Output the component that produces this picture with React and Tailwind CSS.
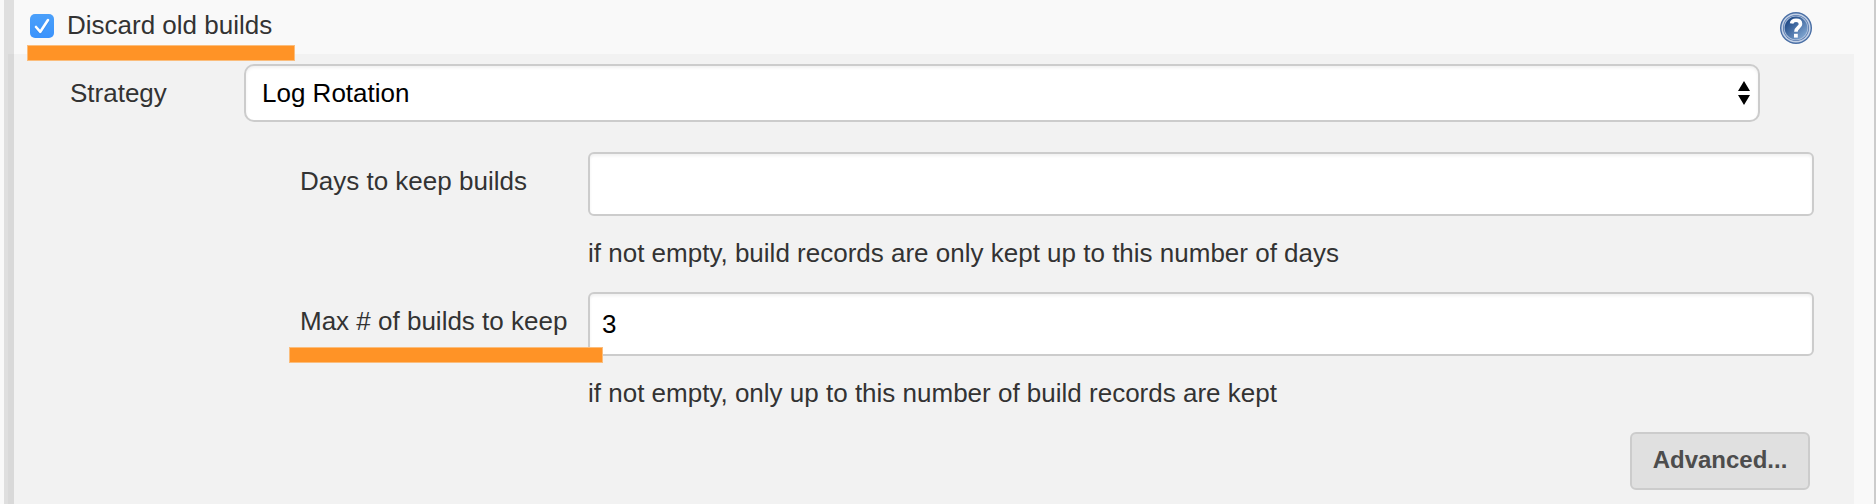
function HelpIcon() {
  return (
    <svg className="mr-[62px] mt-3 size-8 shrink-0" viewBox="0 0 32 32">
      <defs>
        <linearGradient id="help" x1="0" y1="0" x2="1" y2="1">
          <stop offset="0.15" stopColor="#204a87" />
          <stop offset="1" stopColor="#8fb4dc" />
        </linearGradient>
      </defs>
      <circle cx="16" cy="16" r="16" fill="#4a6fa5" />
      <circle cx="16" cy="16" r="14.600" fill="#c3d1e6" />
      <circle cx="16" cy="16" r="13" fill="#5577ad" />
      <circle cx="16" cy="16" r="12.200" fill="#b4c6df" />
      <circle cx="16" cy="16" r="11.400" fill="url(#help)" />
      <path d="M11.600 11.400C11.900 9.200 13.600 8.300 16 8.300c2.900 0 4.500 1.400 4.500 3.600 0 3.600-4.600 3.400-4.600 7.900" fill="none" stroke="#fff" strokeWidth="3.600" />
      <rect x="14" y="21.800" width="3.800" height="3.800" fill="#fff" />
    </svg>
  );
}

function Label({ className, children }) {
  return <span className={`block whitespace-nowrap text-[26px] leading-[30px] ${className}`}>{children}</span>;
}

function Field({ label, value, help }) {
  return (
    <div className="grid h-[140px] grid-cols-[288px_1226px] grid-rows-[64px_76px]">
      <Label className="mt-[14px]">{label}</Label>
      <input
        aria-label={label}
        defaultValue={value}
        className="h-16 w-full rounded-md border-2 border-[#ccc] bg-white px-3 text-[26px] leading-[30px] text-black shadow-[inset_0_2px_3px_rgba(0,0,0,0.06)] outline-none"
      />
      <Label className="col-start-2 mt-[22px]">{help}</Label>
    </div>
  );
}

export default function App() {
  return (
    <main className="relative flex h-[504px] w-[1876px] overflow-hidden border-r-2 border-[#ccc] bg-[#f9f9f9] pl-1 font-['Liberation_Sans',Arial,sans-serif] text-[#333]">
      <div className="flex w-[10px] shrink-0 items-end justify-end bg-[#dfdfdf]">
        <div className="h-[450px] w-1.5 bg-[#d9d9d9]" />
      </div>
      <div className="flex grow flex-col">
        <header className="flex h-[54px] shrink-0 items-start pl-4">
          <svg className="mt-[14px] size-6 shrink-0" viewBox="0 0 24 24">
            <defs>
              <linearGradient id="check" x1="0" y1="0" x2="0" y2="1">
                <stop stopColor="#4ba0fa" />
                <stop offset="1" stopColor="#3b93fc" />
              </linearGradient>
            </defs>
            <rect width="24" height="24" rx="5" fill="url(#check)" />
            <path d="M6 13.200 10.300 18 18 6.500" fill="none" stroke="#2f76cc" strokeWidth="2.600" strokeLinecap="round" opacity=".35" transform="translate(0 1)" />
            <path d="M6 13 10.300 17.800 18 6" fill="none" stroke="#fff" strokeWidth="2.600" strokeLinecap="round" strokeLinejoin="round" />
          </svg>
          <Label className="ml-[13px] mt-[10px] grow">Discard old builds</Label>
          <HelpIcon />
        </header>
        <section className="mr-5 flex grow flex-col bg-[#f2f2f2] pt-[10px]">
          <div className="flex h-[88px] shrink-0 items-start pl-14">
            <Label className="mt-[14px] w-[174px]">Strategy</Label>
            <div className="flex h-[58px] w-[1516px] items-center justify-between rounded-[10px] border-2 border-[#ccc] bg-white pl-4 pr-2 text-black shadow-[inset_0_2px_3px_rgba(0,0,0,0.06)]">
              <Label className="-mt-px">Log Rotation</Label>
              <svg className="h-6 w-3" viewBox="0 0 12 24">
                <path d="M6 0 12 10H0ZM0 14H12L6 24Z" fill="#000" />
              </svg>
            </div>
          </div>
          <div className="pl-[286px]">
            <Field label="Days to keep builds" value="" help="if not empty, build records are only kept up to this number of days" />
            <Field label="Max # of builds to keep" value="3" help="if not empty, only up to this number of build records are kept" />
          </div>
          <button className="mr-11 h-[58px] w-[180px] self-end rounded-md border-2 border-[#ccc] bg-[#e0e0e0] pb-0.5 text-2xl font-bold text-[#4d4d4d]">
            Advanced...
          </button>
        </section>
      </div>
      <div className="absolute left-[27px] top-[45px] h-4 w-[268px] border border-[#fbbd7c] bg-[#ff9326]" />
      <div className="absolute left-[289px] top-[347px] h-4 w-[314px] border border-[#fbbd7c] bg-[#ff9326]" />
    </main>
  );
}
